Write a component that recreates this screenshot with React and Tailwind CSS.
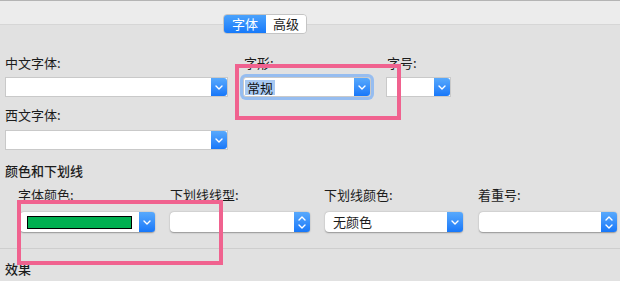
import React from 'react';

const font = { fontFamily: '"Noto Sans CJK SC", "Noto Sans", sans-serif' };

function Chevron({ up }) {
  return (
    <svg width="8" height="5" viewBox="0 0 8 5" className={up ? 'rotate-180' : ''}>
      <path d="M1 1 L4 4 L7 1" fill="none" stroke="white" strokeWidth="1.4" strokeLinecap="round" strokeLinejoin="round" />
    </svg>
  );
}

function ArrowBtn({ stepper }) {
  return (
    <div className="flex w-[16px] flex-col items-center justify-center gap-[3px] rounded-r-[3px] bg-gradient-to-b from-[#58a9fc] to-[#1677f9]">
      {stepper ? (
        <>
          <Chevron up />
          <Chevron />
        </>
      ) : (
        <Chevron />
      )}
    </div>
  );
}

function Combo({ w, children, focused }) {
  return (
    <div
      className={`flex h-[20px] border border-[#c9c9c9] bg-white ${focused ? 'rounded-[3px] shadow-[0_0_0_3px_#96bdf0]' : ''}`}
      style={{ width: w }}
    >
      <div className="flex flex-1 items-center overflow-hidden">{children}</div>
      <ArrowBtn />
    </div>
  );
}

function Popup({ w, children, stepper }) {
  return (
    <div
      className="flex h-[20px] rounded-[4px] bg-white shadow-[0_0.5px_1.5px_rgba(0,0,0,0.35)]"
      style={{ width: w }}
    >
      <div className="flex flex-1 items-center overflow-hidden">{children}</div>
      <ArrowBtn stepper={stepper} />
    </div>
  );
}

function Label({ children }) {
  return <div className="h-[16px] text-[13px] leading-[16px] text-[#1c1c1c] whitespace-nowrap">{children}</div>;
}

export default function App() {
  return (
    <div className="relative h-[281px] w-[620px] overflow-hidden bg-[#e1e1e1]" style={font}>
      {/* header band with segmented tabs */}
      <div className="h-[25px] border-t border-b border-t-[#b4b4b4] border-b-[#d6d6d6] bg-[#ececec] pl-[223px] pt-[13px]">
        <div className="relative z-10 flex h-[20px] w-[84px] overflow-hidden rounded-[4px] border border-[#c4c4c4] text-[13px] leading-[18px]">
          <div className="flex w-[42px] items-center justify-center bg-gradient-to-b from-[#4aa2fc] to-[#1679fa] text-white">字体</div>
          <div className="flex flex-1 items-center justify-center bg-white text-[#1c1c1c]">高级</div>
        </div>
      </div>

      {/* font rows */}
      <div className="flex pl-[5px] pt-[30px]">
        <div className="w-[223px]">
          <Label>中文字体:</Label>
          <div className="mt-[6px]">
            <Combo w={223} />
          </div>
        </div>
        <div className="ml-[15px] w-[128px]">
          <div className="pl-[1px]">
            <Label>字形:</Label>
          </div>
          <div className="mt-[6px]">
            <Combo w={128} focused>
              <span className="ml-[1px] bg-[#a8c9f2] px-[2px] text-[13px] leading-[15px] text-[#111]">常规</span>
            </Combo>
          </div>
        </div>
        <div className="ml-[15px] w-[65px]">
          <div className="pl-[1px]">
            <Label>字号:</Label>
          </div>
          <div className="mt-[6px]">
            <Combo w={65} />
          </div>
        </div>
      </div>

      <div className="pl-[5px]">
        <div className="mt-[10px]">
          <Label>西文字体:</Label>
        </div>
        <div className="mt-[7px]">
          <Combo w={223} />
        </div>
        <div className="mt-[13px] font-medium">
          <Label>颜色和下划线</Label>
        </div>
      </div>

      {/* colour & underline row */}
      <div className="mt-[8px] flex">
        <div className="ml-[18px] w-[137px]">
          <Label>字体颜色:</Label>
          <div className="ml-[2px] mt-[9px]">
            <Popup w={135}>
              <div className="ml-[7px] h-[13px] w-[105px] border border-black bg-[#00b050]" />
            </Popup>
          </div>
        </div>
        <div className="ml-[15px] w-[140px]">
          <Label>下划线线型:</Label>
          <div className="mt-[9px]">
            <Popup w={140} stepper />
          </div>
        </div>
        <div className="ml-[14px] w-[139px]">
          <Label>下划线颜色:</Label>
          <div className="ml-[1px] mt-[9px]">
            <Popup w={138}>
              <span className="ml-[8px] text-[13px] leading-[16px] text-[#1c1c1c]">无颜色</span>
            </Popup>
          </div>
        </div>
        <div className="ml-[15px] w-[139px]">
          <Label>着重号:</Label>
          <div className="ml-[1px] mt-[9px]">
            <Popup w={138} stepper />
          </div>
        </div>
      </div>

      <div className="mt-[16px] border-t border-[#cecece]" />
      <div className="mt-[12px] pl-[5px] font-medium">
        <Label>效果</Label>
      </div>

      {/* annotation boxes */}
      <div className="absolute left-[235px] top-[64px] h-[56px] w-[166px] border-4 border-[#f0628f]" />
      <div className="absolute left-[17px] top-[200px] h-[65px] w-[206px] border-4 border-[#f0628f]" />
    </div>
  );
}
